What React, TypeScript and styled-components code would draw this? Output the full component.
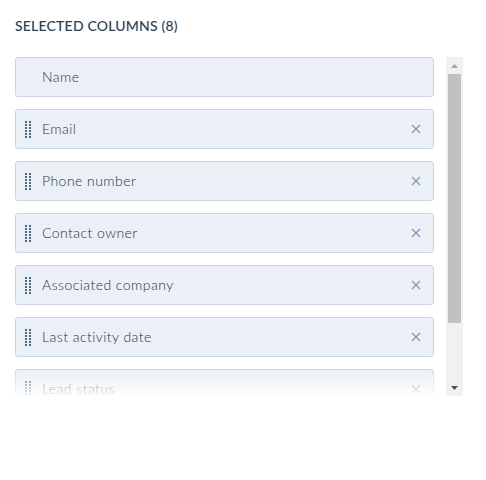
import React from "react";
import styled, { createGlobalStyle } from "styled-components";

const Global = createGlobalStyle`
  html, body { margin: 0; padding: 0; background: #ffffff; }
  body { font-family: Lato, "Noto Sans", sans-serif; color: #33475b; }
`;

const Page = styled.div`
  padding: 17px 23px 0 15px;
  width: 448px;
`;

const Heading = styled.h2`
  margin: 0 0 22px 0;
  font-size: 14px;
  font-weight: 500;
  line-height: 18px;
  letter-spacing: 0.2px;
  color: #2d3e50;
  text-transform: uppercase;
`;

const Frame = styled.div`
  position: relative;
  display: flex;
  height: 339px;
  overflow: hidden;
`;

const List = styled.div`
  flex: 1;
  display: flex;
  flex-direction: column;
  gap: 12px;
  padding-right: 12px;
`;

const Card = styled.div`
  flex: none;
  height: 38px;
  display: flex;
  align-items: center;
  border: 1px solid #cbd6e2;
  border-radius: 3px;
  background: #eaf0f6;
  padding: 0 12px 0 9px;
  font-size: 14px;
  color: #1f3044;
`;

const Handle = styled.span<{ $hidden?: boolean }>`
  width: 6px;
  height: 17px;
  margin-right: 11px;
  flex: none;
  visibility: ${(p) => (p.$hidden ? "hidden" : "visible")};
  background:
    linear-gradient(#4a6a8c, #4a6a8c) 0 0 / 2px 100% no-repeat,
    linear-gradient(#4a6a8c, #4a6a8c) 4px 0 / 2px 100% no-repeat;
  -webkit-mask: repeating-linear-gradient(#000 0 2px, transparent 2px 3px);
  mask: repeating-linear-gradient(#000 0 2px, transparent 2px 3px);
`;

const Label = styled.span`
  flex: 1;
  line-height: 18px;
  font-weight: 300;
  letter-spacing: 0.45px;
`;

const Remove = styled.button`
  border: 0;
  background: none;
  padding: 0;
  width: 10px;
  height: 10px;
  display: flex;
  align-items: center;
  justify-content: center;
  cursor: pointer;
`;

const Fade = styled.div`
  position: absolute;
  left: 0;
  right: 17px;
  bottom: 0;
  height: 28px;
  background: linear-gradient(rgba(255,255,255,0), rgba(255,255,255,0.55) 60%, rgba(255,255,255,0.9));
  pointer-events: none;
`;

const Scrollbar = styled.div`
  flex: none;
  width: 17px;
  background: #f1f1f1;
  display: flex;
  flex-direction: column;
`;

const Arrow = styled.div`
  height: 17px;
  display: flex;
  align-items: center;
  justify-content: center;
  flex: none;
`;

const Track = styled.div`
  flex: 1;
  padding: 0 2px;
  display: flex;
  flex-direction: column;
`;

const Thumb = styled.div`
  height: 249px;
  background: #c1c1c1;
`;

const XIcon = () => (
  <svg width="10" height="10" viewBox="0 0 10 10">
    <path d="M1 1 L9 9 M9 1 L1 9" stroke="#7c98b6" strokeWidth="1.2" fill="none" />
  </svg>
);

const columns = [
  "Email",
  "Phone number",
  "Contact owner",
  "Associated company",
  "Last activity date",
  "Lead status",
  "Create date",
];

export default function App() {
  return (
    <>
      <Global />
      <Page>
        <Heading>Selected columns (8)</Heading>
        <Frame>
          <List>
            <Card>
              <Handle $hidden />
              <Label>Name</Label>
            </Card>
            {columns.map((c) => (
              <Card key={c}>
                <Handle />
                <Label>{c}</Label>
                <Remove aria-label={`Remove ${c}`}>
                  <XIcon />
                </Remove>
              </Card>
            ))}
          </List>
          <Fade />
          <Scrollbar>
            <Arrow>
              <svg width="7" height="4" viewBox="0 0 7 4"><path d="M0 4 L3.5 0 L7 4 Z" fill="#a3a3a3" /></svg>
            </Arrow>
            <Track>
              <Thumb />
            </Track>
            <Arrow>
              <svg width="7" height="4" viewBox="0 0 7 4"><path d="M0 0 L3.5 4 L7 0 Z" fill="#505050" /></svg>
            </Arrow>
          </Scrollbar>
        </Frame>
      </Page>
    </>
  );
}
